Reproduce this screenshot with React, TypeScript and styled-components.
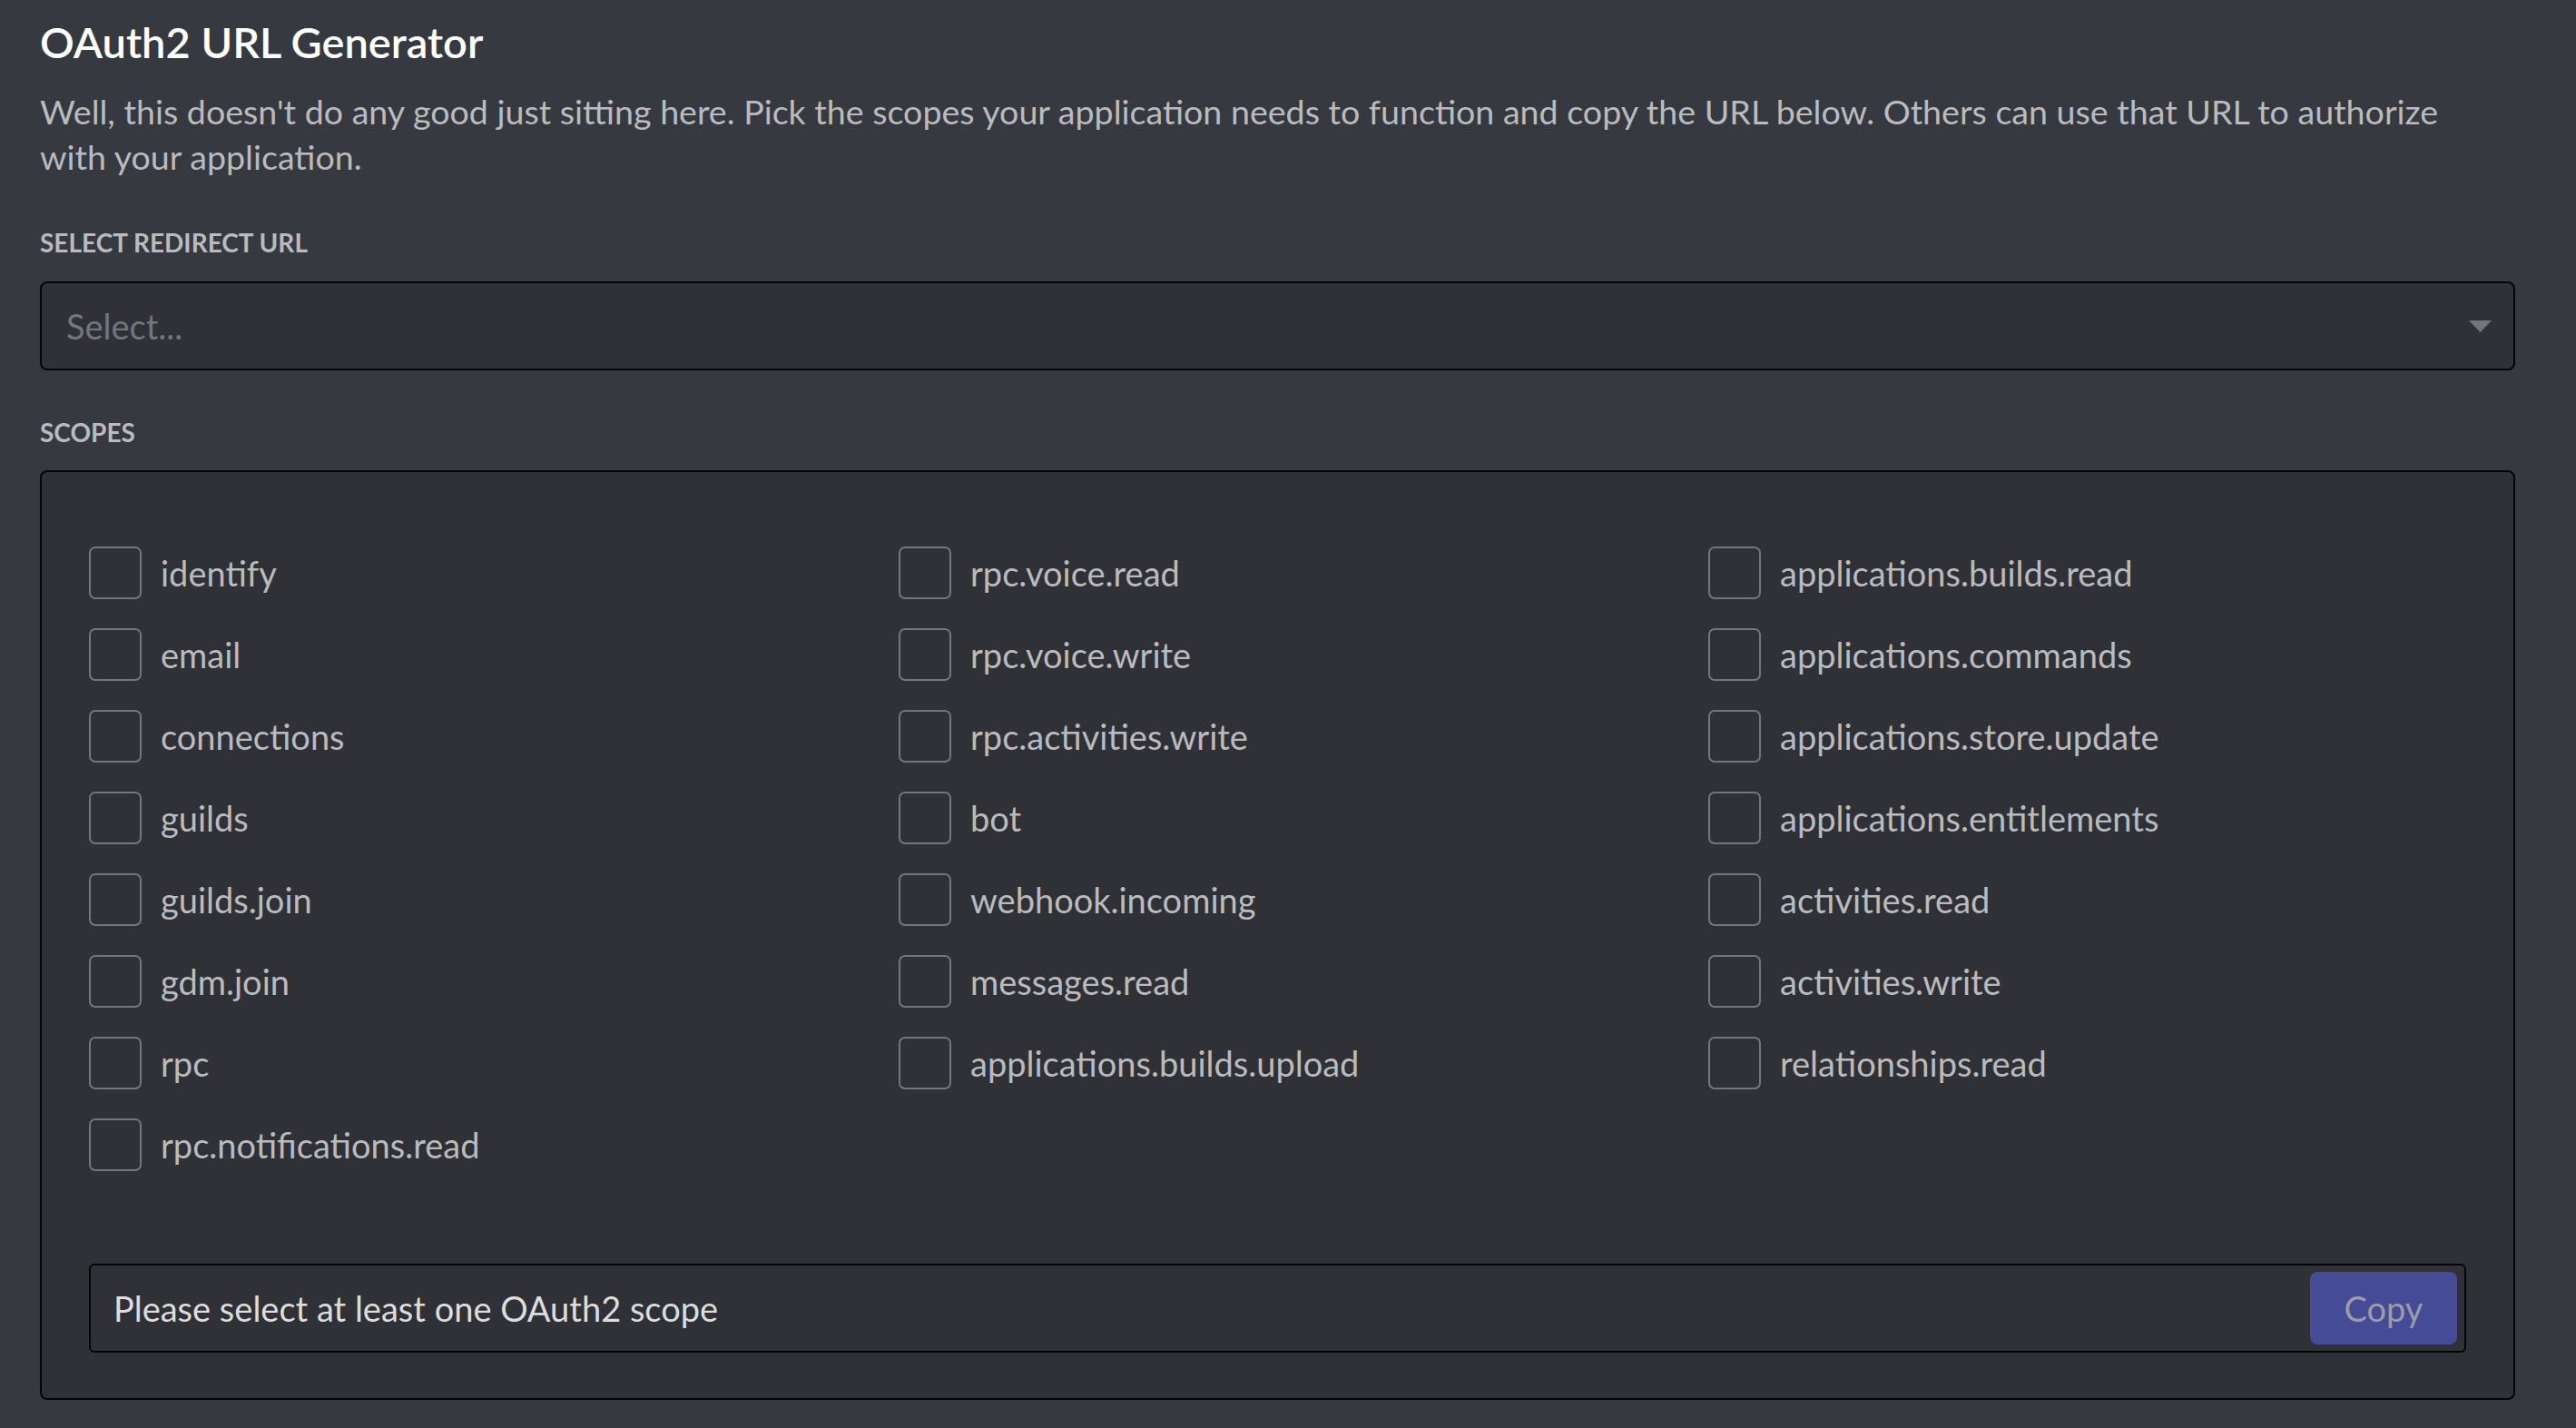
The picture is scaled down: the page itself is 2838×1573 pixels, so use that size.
import React from "react";
import styled, { createGlobalStyle } from "styled-components";

const GlobalStyle = createGlobalStyle`
  html, body {
    margin: 0;
    padding: 0;
    background-color: #36393f;
  }
  body {
    font-family: Lato, "Noto Sans", sans-serif;
  }
`;

const Page = styled.div`
  min-height: 100vh;
  box-sizing: border-box;
  padding: 18px 67px 30px 44px;
  background-color: #36393f;
`;

const Title = styled.h2`
  margin: 0;
  color: #ffffff;
  font-size: 47px;
  line-height: 56px;
  font-weight: 600;
`;

const Description = styled.p`
  margin: 24px 0 0;
  max-width: 2670px;
  color: #b9bbbe;
  font-size: 37.6px;
  line-height: 50px;
  font-weight: 400;
`;

const SectionLabel = styled.h5<{ $top: number }>`
  margin: ${(p) => p.$top}px 0 0;
  color: #b9bbbe;
  font-size: 28px;
  line-height: 36px;
  font-weight: 700;
  text-transform: uppercase;
`;

const SelectBox = styled.div`
  margin-top: 25px;
  height: 98px;
  box-sizing: border-box;
  display: flex;
  align-items: center;
  justify-content: space-between;
  padding: 0 24px 0 27px;
  background-color: #2f3136;
  border: 2px solid #040405;
  border-radius: 8px;
`;

const Placeholder = styled.span`
  color: #72767d;
  font-size: 38px;
`;

const Caret = styled.svg`
  width: 25px;
  height: 13px;
  fill: #72767d;
`;

const ScopesBox = styled.div`
  margin-top: 24px;
  box-sizing: border-box;
  padding: 66px 52px 50px;
  background-color: #2f3136;
  border: 2px solid #040405;
  border-radius: 8px;
`;

const ScopeGrid = styled.div`
  display: grid;
  grid-template-columns: repeat(3, 892px);
  grid-template-rows: repeat(8, 90px);
`;

const ScopeItem = styled.label<{ $col: number; $row: number }>`
  grid-column: ${(p) => p.$col};
  grid-row: ${(p) => p.$row};
  display: flex;
  align-items: center;
  gap: 21px;
  cursor: pointer;
`;

const Box = styled.span`
  width: 58px;
  height: 58px;
  box-sizing: border-box;
  flex-shrink: 0;
  border: 2px solid #72767d;
  border-radius: 7px;
`;

const ScopeName = styled.span`
  color: #b9bbbe;
  font-size: 38px;
  line-height: 46px;
`;

const UrlBar = styled.div`
  margin-top: 86px;
  height: 98px;
  box-sizing: border-box;
  display: flex;
  align-items: center;
  justify-content: space-between;
  padding: 0 8px 0 25px;
  background-color: #2f3136;
  border: 2px solid #040405;
  border-radius: 6px;
`;

const UrlText = styled.span`
  color: #dcddde;
  font-size: 38px;
`;

const CopyButton = styled.button`
  width: 162px;
  height: 80px;
  border: none;
  border-radius: 8px;
  background-color: #464b96;
  color: #9a9cab;
  font-family: Lato, "Noto Sans", sans-serif;
  font-size: 38px;
  cursor: not-allowed;
`;

const columns: string[][] = [
  ["identify", "email", "connections", "guilds", "guilds.join", "gdm.join", "rpc", "rpc.notifications.read"],
  ["rpc.voice.read", "rpc.voice.write", "rpc.activities.write", "bot", "webhook.incoming", "messages.read", "applications.builds.upload"],
  [
    "applications.builds.read",
    "applications.commands",
    "applications.store.update",
    "applications.entitlements",
    "activities.read",
    "activities.write",
    "relationships.read",
  ],
];

export default function App() {
  return (
    <>
      <GlobalStyle />
      <Page>
        <Title>OAuth2 URL Generator</Title>
        <Description>
          Well, this doesn't do any good just sitting here. Pick the scopes your application needs to function and
          copy the URL below. Others can use that URL to authorize with your application.
        </Description>

        <SectionLabel $top={51}>Select Redirect URL</SectionLabel>
        <SelectBox>
          <Placeholder>Select...</Placeholder>
          <Caret viewBox="0 0 25 13">
            <polygon points="0,0 25,0 12.5,13" />
          </Caret>
        </SelectBox>

        <SectionLabel $top={50}>Scopes</SectionLabel>
        <ScopesBox>
          <ScopeGrid>
            {columns.map((col, ci) =>
              col.map((name, ri) => (
                <ScopeItem key={name} $col={ci + 1} $row={ri + 1}>
                  <Box />
                  <ScopeName>{name}</ScopeName>
                </ScopeItem>
              ))
            )}
          </ScopeGrid>
          <UrlBar>
            <UrlText>Please select at least one OAuth2 scope</UrlText>
            <CopyButton disabled>Copy</CopyButton>
          </UrlBar>
        </ScopesBox>
      </Page>
    </>
  );
}
